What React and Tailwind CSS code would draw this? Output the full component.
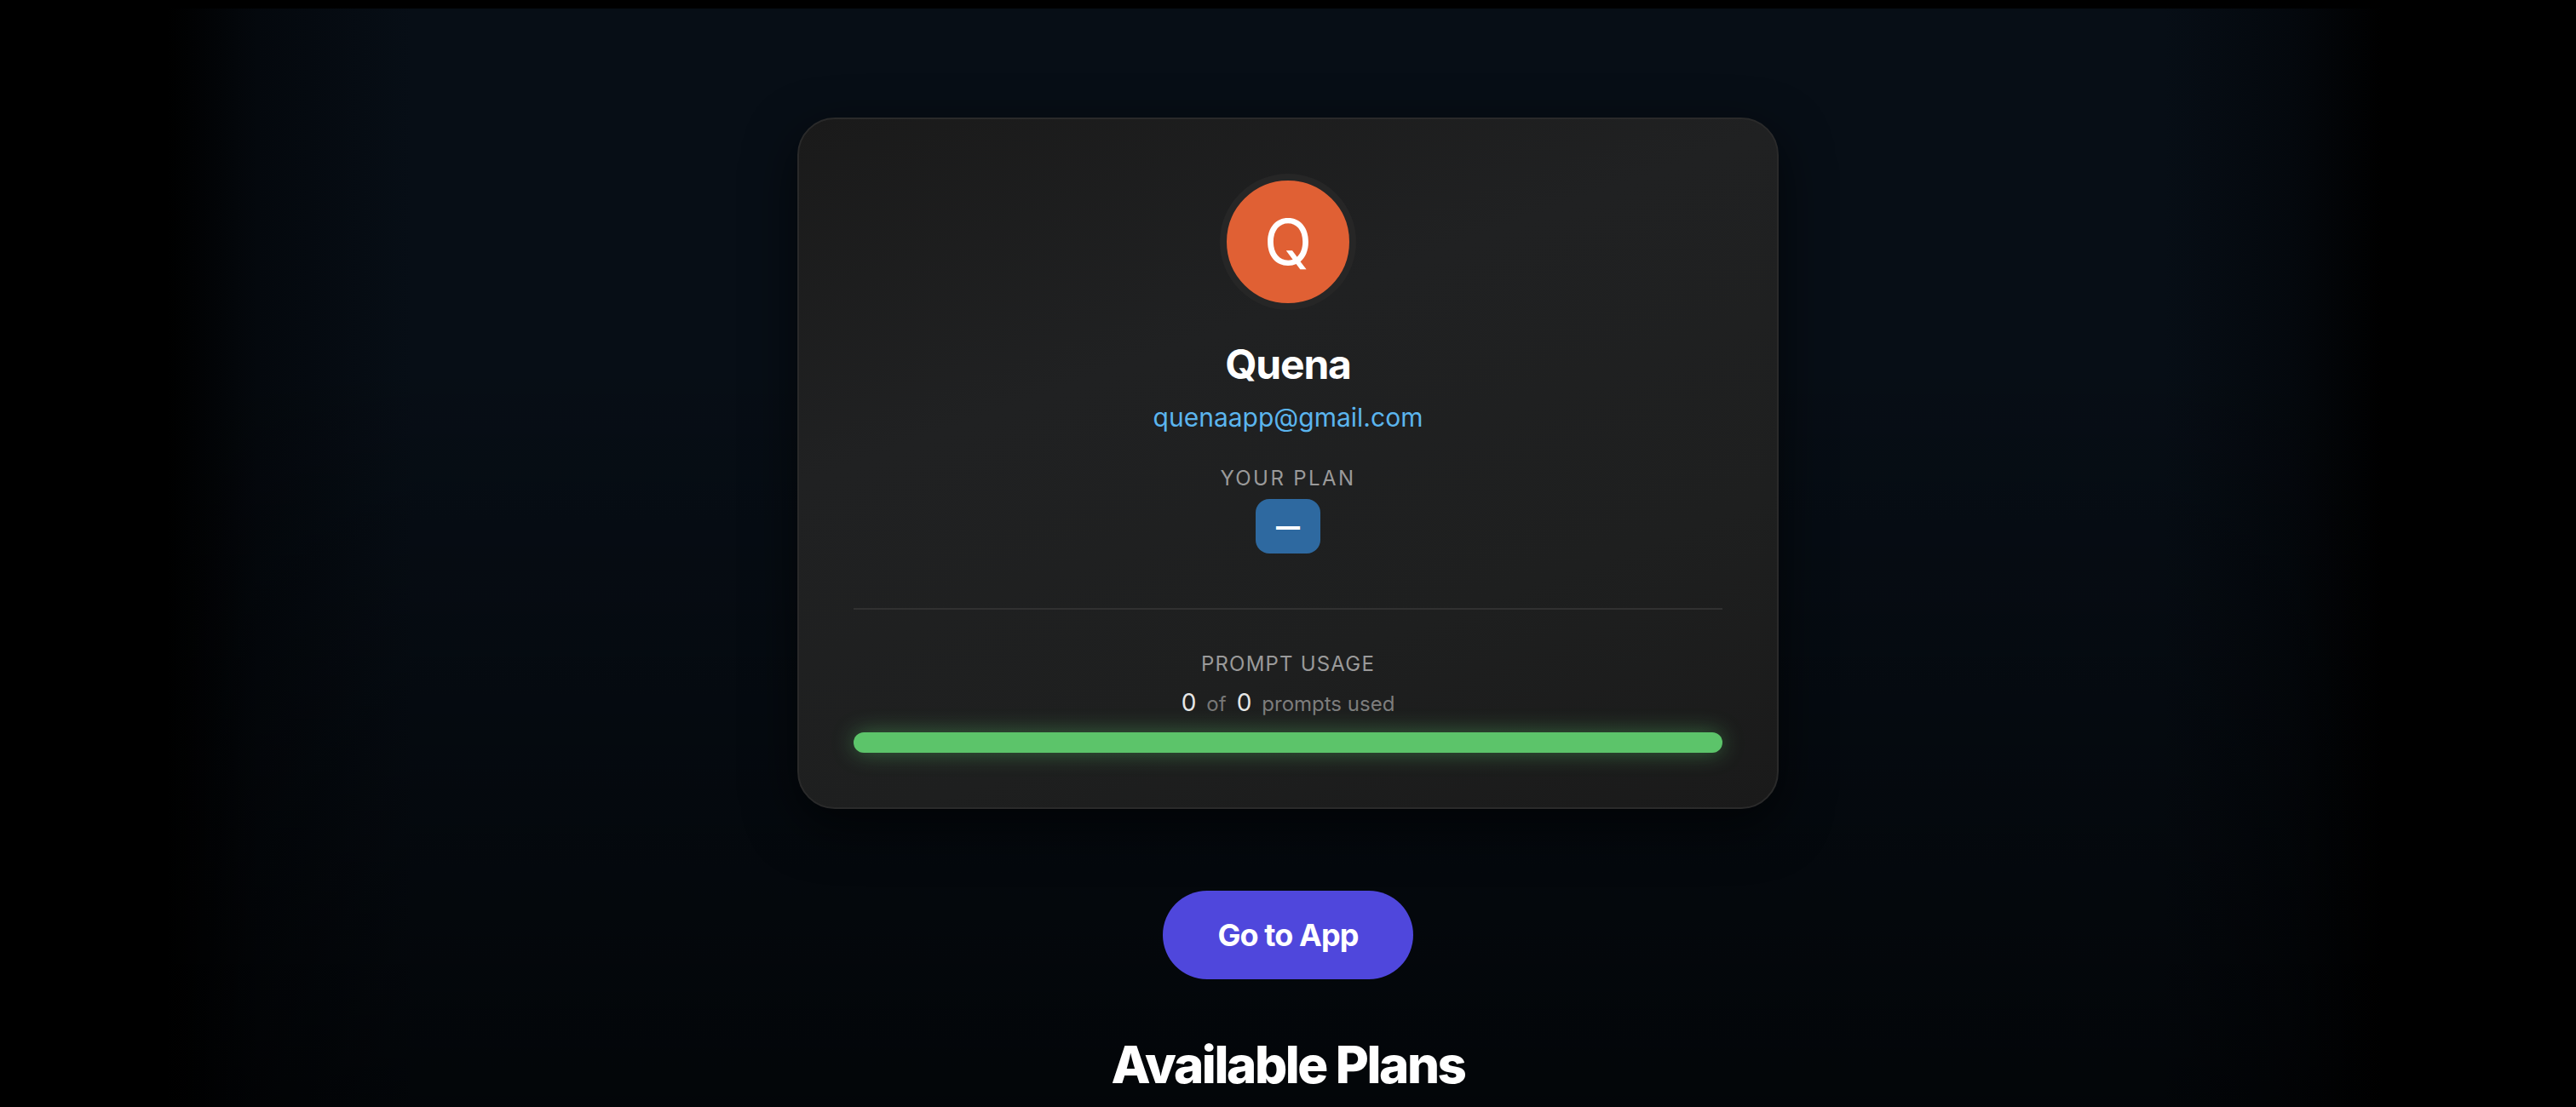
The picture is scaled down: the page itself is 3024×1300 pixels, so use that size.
const font = { fontFamily: 'Inter, "Noto Sans", sans-serif' };

function ProfileCard() {
  return (
    <div className="w-[1152px] rounded-[44px] border-2 border-[#2a2a2a] bg-[linear-gradient(160deg,#1a1a1a_0%,#202122_35%,#1e1f1f_70%,#1a1a1a_100%)] p-16 flex flex-col items-center shadow-[0_20px_60px_rgba(0,0,0,0.6)]">
      {/* Avatar */}
      <div className="w-[160px] h-[160px] rounded-full border-[8px] border-[#262626] bg-[#e06034] flex items-center justify-center">
        <span className="text-white text-[74px] leading-none font-normal">Q</span>
      </div>

      <h2 className="mt-8 text-white text-[48px] leading-[64px] font-bold tracking-tight">Quena</h2>
      <p className="mt-[6px] text-[#5bb5ee] text-[30px] leading-[48px]">quenaapp@gmail.com</p>

      {/* Plan */}
      <div className="mt-8 text-[#9a9a9a] text-[24px] leading-8 tracking-widest">YOUR PLAN</div>
      <div className="mt-2 h-16 px-6 rounded-2xl bg-[#2e69a0] flex items-center justify-center">
        <span className="text-white text-[28px] font-black leading-none">—</span>
      </div>

      {/* Usage */}
      <div className="mt-16 w-full border-t-2 border-[#313131] pt-12 flex flex-col items-center">
        <div className="text-[#9a9a9a] text-[24px] leading-8 tracking-wider">PROMPT USAGE</div>
        <div className="mt-2 h-10 flex items-baseline gap-3">
          <span className="text-[#e6e6e6] text-[28px]">0</span>
          <span className="text-[#777] text-[24px]">of</span>
          <span className="text-[#e6e6e6] text-[28px]">0</span>
          <span className="text-[#7d7d7d] text-[24px]">prompts used</span>
        </div>
        <div className="mt-4 w-full h-6 rounded-full bg-[#5cc46a] shadow-[0_0_26px_rgba(92,196,106,0.45)]" />
      </div>
    </div>
  );
}

export default function App() {
  return (
    <div className="min-h-screen bg-black pt-[10px]" style={font}>
      <div className="min-h-[1290px] bg-[linear-gradient(180deg,rgba(0,0,0,0)_0%,rgba(0,0,0,0)_30%,rgba(0,0,0,0.65)_100%),linear-gradient(90deg,#000_6.5%,#04080d_10%,#070e16_16%,#070e16_84%,#04080d_89%,#000_92.5%)] flex flex-col items-center pt-32 pb-16">
        <ProfileCard />

        <button className="mt-24 h-[104px] px-16 rounded-full bg-[#4f47dc] text-white text-[36px] font-bold tracking-tight">
          Go to App
        </button>

        <h1 className="mt-16 text-white text-[60px] leading-[72px] font-extrabold tracking-[-0.04em]">
          Available Plans
        </h1>
      </div>
    </div>
  );
}
